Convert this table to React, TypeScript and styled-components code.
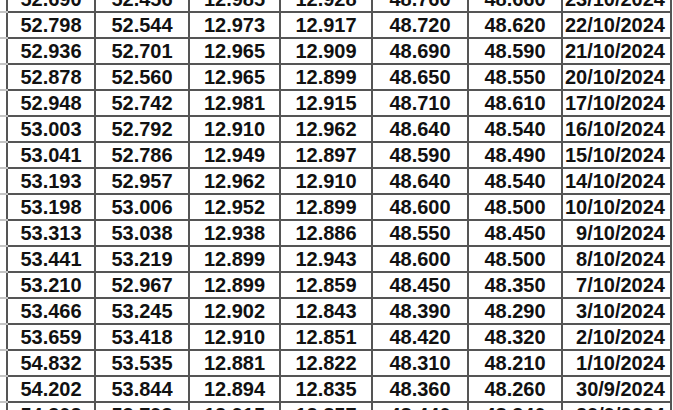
import React from 'react'
import styled, { createGlobalStyle } from 'styled-components'

const GlobalStyle = createGlobalStyle`
   html, body {
      margin: 0;
      padding: 0;
      background: #ffffff;
   }
`

type Row = [string, string, string, string, string, string, string]

const rows: Row[] = [
   ['52.690', '52.456', '12.985', '12.928', '48.760', '48.660', '23/10/2024'],
   ['52.798', '52.544', '12.973', '12.917', '48.720', '48.620', '22/10/2024'],
   ['52.936', '52.701', '12.965', '12.909', '48.690', '48.590', '21/10/2024'],
   ['52.878', '52.560', '12.965', '12.899', '48.650', '48.550', '20/10/2024'],
   ['52.948', '52.742', '12.981', '12.915', '48.710', '48.610', '17/10/2024'],
   ['53.003', '52.792', '12.910', '12.962', '48.640', '48.540', '16/10/2024'],
   ['53.041', '52.786', '12.949', '12.897', '48.590', '48.490', '15/10/2024'],
   ['53.193', '52.957', '12.962', '12.910', '48.640', '48.540', '14/10/2024'],
   ['53.198', '53.006', '12.952', '12.899', '48.600', '48.500', '10/10/2024'],
   ['53.313', '53.038', '12.938', '12.886', '48.550', '48.450', '9/10/2024'],
   ['53.441', '53.219', '12.899', '12.943', '48.600', '48.500', '8/10/2024'],
   ['53.210', '52.967', '12.899', '12.859', '48.450', '48.350', '7/10/2024'],
   ['53.466', '53.245', '12.902', '12.843', '48.390', '48.290', '3/10/2024'],
   ['53.659', '53.418', '12.910', '12.851', '48.420', '48.320', '2/10/2024'],
   ['54.832', '53.535', '12.881', '12.822', '48.310', '48.210', '1/10/2024'],
   ['54.202', '53.844', '12.894', '12.835', '48.360', '48.260', '30/9/2024'],
   ['54.302', '53.793', '12.915', '12.857', '48.440', '48.340', '29/9/2024'],
]

const widths = [7, 88, 94, 91, 92, 96, 94, 109]

const App = () => {
   return (
      <Viewport>
         <GlobalStyle />
         <Table>
            <colgroup>
               {widths.map((w, i) => (
                  <col key={i} style={{ width: w }} />
               ))}
            </colgroup>
            <tbody>
               {rows.map((r, i) => (
                  <tr key={i}>
                     <Edge />
                     {r.map((v, j) => (
                        <Cell key={j} $date={j === 6}>{v}</Cell>
                     ))}
                  </tr>
               ))}
            </tbody>
         </Table>
      </Viewport>
   )
}

export default App

const Viewport = styled.div`
   width: 673px;
   height: 410px;
   overflow: hidden;
   background: #ffffff;
`

const Table = styled.table`
   margin-top: -15px;
   border-collapse: collapse;
   table-layout: fixed;
   width: 671px;
   font-family: "Liberation Sans", Arial, sans-serif;
   font-weight: bold;
   font-size: 20px;
   color: #111111;

   tr {
      height: 26px;
   }
`

const Cell = styled.td<{ $date?: boolean }>`
   border: 2px solid #555555;
   padding: 0 ${p => (p.$date ? '5px' : '0')} 0 0;
   text-align: ${p => (p.$date ? 'right' : 'center')};
   vertical-align: middle;
   line-height: 22px;
   white-space: nowrap;
   overflow: hidden;
`

const Edge = styled.td`
   border-top: 2px solid #c4c4c4;
   border-bottom: 2px solid #c4c4c4;
   padding: 0;
`
